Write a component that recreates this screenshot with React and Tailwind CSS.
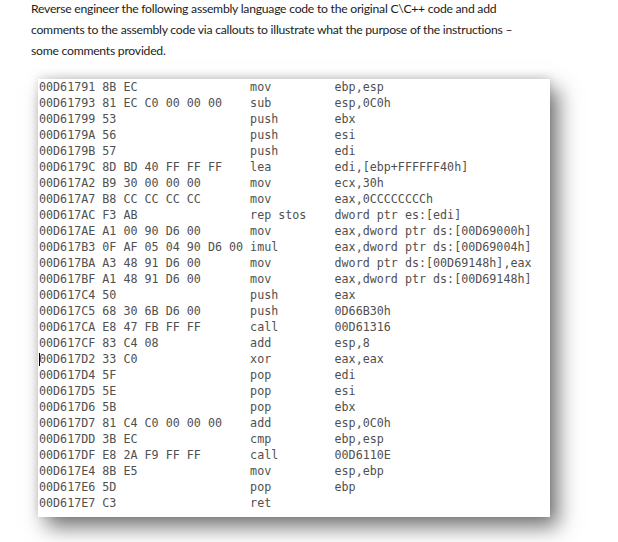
import React from 'react';

// disassembly rows: address, opcode bytes, mnemonic, operands
const rows = [
    ['00D61791', '8B EC', 'mov', 'ebp,esp'],
    ['00D61793', '81 EC C0 00 00 00', 'sub', 'esp,0C0h'],
    ['00D61799', '53', 'push', 'ebx'],
    ['00D6179A', '56', 'push', 'esi'],
    ['00D6179B', '57', 'push', 'edi'],
    ['00D6179C', '8D BD 40 FF FF FF', 'lea', 'edi,[ebp+FFFFFF40h]'],
    ['00D617A2', 'B9 30 00 00 00', 'mov', 'ecx,30h'],
    ['00D617A7', 'B8 CC CC CC CC', 'mov', 'eax,0CCCCCCCCh'],
    ['00D617AC', 'F3 AB', 'rep stos', 'dword ptr es:[edi]'],
    ['00D617AE', 'A1 00 90 D6 00', 'mov', 'eax,dword ptr ds:[00D69000h]'],
    ['00D617B3', '0F AF 05 04 90 D6 00', 'imul', 'eax,dword ptr ds:[00D69004h]'],
    ['00D617BA', 'A3 48 91 D6 00', 'mov', 'dword ptr ds:[00D69148h],eax'],
    ['00D617BF', 'A1 48 91 D6 00', 'mov', 'eax,dword ptr ds:[00D69148h]'],
    ['00D617C4', '50', 'push', 'eax'],
    ['00D617C5', '68 30 6B D6 00', 'push', '0D66B30h'],
    ['00D617CA', 'E8 47 FB FF FF', 'call', '00D61316'],
    ['00D617CF', '83 C4 08', 'add', 'esp,8'],
    ['00D617D2', '33 C0', 'xor', 'eax,eax'],
    ['00D617D4', '5F', 'pop', 'edi'],
    ['00D617D5', '5E', 'pop', 'esi'],
    ['00D617D6', '5B', 'pop', 'ebx'],
    ['00D617D7', '81 C4 C0 00 00 00', 'add', 'esp,0C0h'],
    ['00D617DD', '3B EC', 'cmp', 'ebp,esp'],
    ['00D617DF', 'E8 2A F9 FF FF', 'call', '00D6110E'],
    ['00D617E4', '8B E5', 'mov', 'esp,ebp'],
    ['00D617E6', '5D', 'pop', 'ebp'],
    ['00D617E7', 'C3', 'ret', ''],
];

const Row = ({ row, cursor }) => {
    const [addr, bytes, op, args] = row;
    const line = (addr + ' ' + bytes).padEnd(30, ' ') + op.padEnd(12, ' ') + args;
    return (
        <div className="relative h-4 leading-4 whitespace-pre">
            {cursor && <span className="absolute left-0 top-[2px] w-px h-[13px] bg-black" />}
            {line}
        </div>
    );
};

export default function App() {
    return (
        <div className="w-[618px] h-[542px] bg-white overflow-hidden">
            <p
                className="pl-[31px] mt-[-2px] text-[12.2px] tracking-[-0.25px] leading-[21px] text-[#1c1c1c]"
                style={{ fontFamily: 'Lato, "Open Sans", sans-serif' }}
            >
                Reverse engineer the following assembly language code to the original C\C++ code and add
                <br />
                comments to the assembly code via callouts to illustrate what the purpose of the instructions –
                <br />
                some comments provided.
            </p>

            <div className="ml-[38px] mt-[18px] w-[512px] h-[438px] bg-white overflow-hidden pl-px shadow-[8px_10px_20px_rgba(0,0,0,0.55),0_-2px_8px_rgba(0,0,0,0.12)] text-[11.7px] text-[#505050] font-['DejaVu_Sans_Mono',monospace]">
                {rows.map((r) => (
                    <Row key={r[0]} row={r} cursor={r[0] === '00D617D2'} />
                ))}
            </div>
        </div>
    );
}
